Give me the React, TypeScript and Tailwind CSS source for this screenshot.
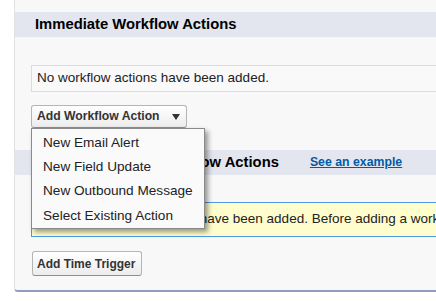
import React from "react";

export default function App() {
  return (
    <div className="w-[436px] h-[302px] bg-white overflow-hidden font-['Liberation_Sans',Arial,sans-serif] text-[#222]">
      <div className="ml-[14px] w-[470px] h-[292px] bg-[#f8f8f8] border-l border-[#e2e2e2] border-b-2 border-b-[#8e9dbf] rounded-bl-[4px] pt-[12px]">
        <div className="h-[25px] bg-[#e3e6ee] flex items-center pl-[20px]">
          <h3 className="font-bold text-[14.8px] text-black leading-none">Immediate Workflow Actions</h3>
        </div>
        <div className="pl-[16px] pt-[28px]">
          <div className="h-[27px] border border-[#dcdcdc] bg-[#f9f9f9] pl-[5px] flex items-center text-[13.5px]">
            No workflow actions have been added.
          </div>
          <div className="relative mt-[13px] h-[23px]">
            <button className="h-[23px] w-[156px] flex items-center pl-[5px] border border-[#b5b5b5] border-b-[#8f8f8f] rounded-[3px] bg-linear-to-b from-white to-[#ececec] text-[12.2px] font-bold text-[#333]">
              <span>Add Workflow Action</span>
              <svg width="8" height="6" viewBox="0 0 8 6" className="ml-[12px]">
                <path d="M0 0 L8 0 L4 6 Z" fill="#333" />
              </svg>
            </button>
            <div className="absolute top-[23px] left-0 w-[174px] h-[101px] z-10 bg-[#fafafa] border border-[#8a8a8a] shadow-[3px_3px_5px_rgba(0,0,0,0.4)] py-[2px]">
              {["New Email Alert", "New Field Update", "New Outbound Message", "Select Existing Action"].map((t) => (
                <div key={t} className="h-[24.25px] flex items-center pl-[11px] text-[13.6px] text-[#222]">
                  {t}
                </div>
              ))}
            </div>
          </div>
        </div>
        <div className="mt-[22px] h-[25px] bg-[#e3e6ee] flex items-center pl-[20px]">
          <h3 className="font-bold text-[14.8px] text-black leading-none">Time-Dependent Workflow Actions</h3>
          <a className="ml-[31px] text-[12.3px] font-bold text-[#015ba7] underline leading-none" href="#">
            See an example
          </a>
        </div>
        <div className="pl-[16px] pt-[27px]">
          <div className="h-[35px] border border-[#4a9be3] bg-[#fffdcc] pl-[44px] flex items-center text-[13.5px] whitespace-nowrap overflow-hidden">
            No workflow actions have been added. Before adding a workflow action, you must have at least one time trigger defined.
          </div>
          <button className="mt-[14px] ml-[1px] h-[25px] w-[110px] flex items-center pl-[4px] border border-[#b5b5b5] border-b-[#8f8f8f] rounded-[3px] bg-linear-to-b from-white to-[#ececec] text-[12px] font-bold text-[#333]">
            Add Time Trigger
          </button>
        </div>
      </div>
    </div>
  );
}
